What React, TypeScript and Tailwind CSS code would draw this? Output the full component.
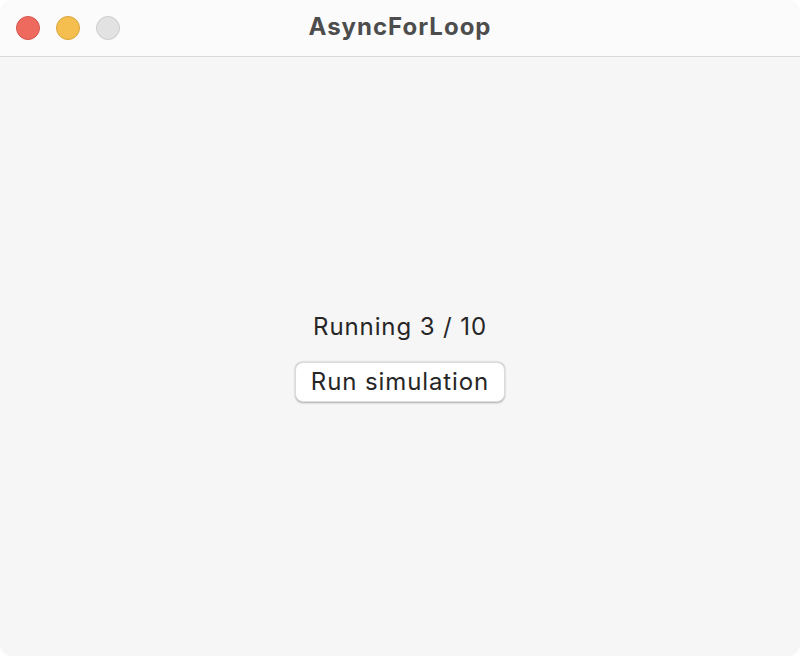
import React from "react";

export default function App() {
  return (
    <div className="w-[800px] h-[656px] bg-white" style={{ fontFamily: "Inter, 'Noto Sans', sans-serif" }}>
      <div className="w-full h-full rounded-[12px] overflow-hidden bg-[#f6f6f6] flex flex-col">
        <div className="h-[57px] shrink-0 bg-[#fbfbfb] border-b border-[#d9d9d9] relative flex items-center justify-center">
          <div className="absolute left-[16px] top-[16px] flex gap-[16px]">
            <div className="w-[24px] h-[24px] rounded-full bg-[#ee6a5f] border border-[#d5564c]" />
            <div className="w-[24px] h-[24px] rounded-full bg-[#f5bf4f] border border-[#dba43a]" />
            <div className="w-[24px] h-[24px] rounded-full bg-[#e2e2e2] border border-[#cdcdcd]" />
          </div>
          <span className="text-[24px] font-bold text-[#4d4d4d] tracking-[1px] mt-[-2px]">AsyncForLoop</span>
        </div>
        <div className="flex-1 flex flex-col items-center justify-center gap-[20px]">
          <div className="text-[24px] text-[#262626] leading-[30px] tracking-[0.9px]">Running 3 / 10</div>
          <button className="h-[40px] w-[210px] rounded-[8px] bg-white text-[24px] tracking-[0.9px] text-[#262626] shadow-[0_0.5px_2px_rgba(0,0,0,0.3)] border-[0.5px] border-[#dcdcdc] flex items-center justify-center">
            Run simulation
          </button>
        </div>
      </div>
    </div>
  );
}
